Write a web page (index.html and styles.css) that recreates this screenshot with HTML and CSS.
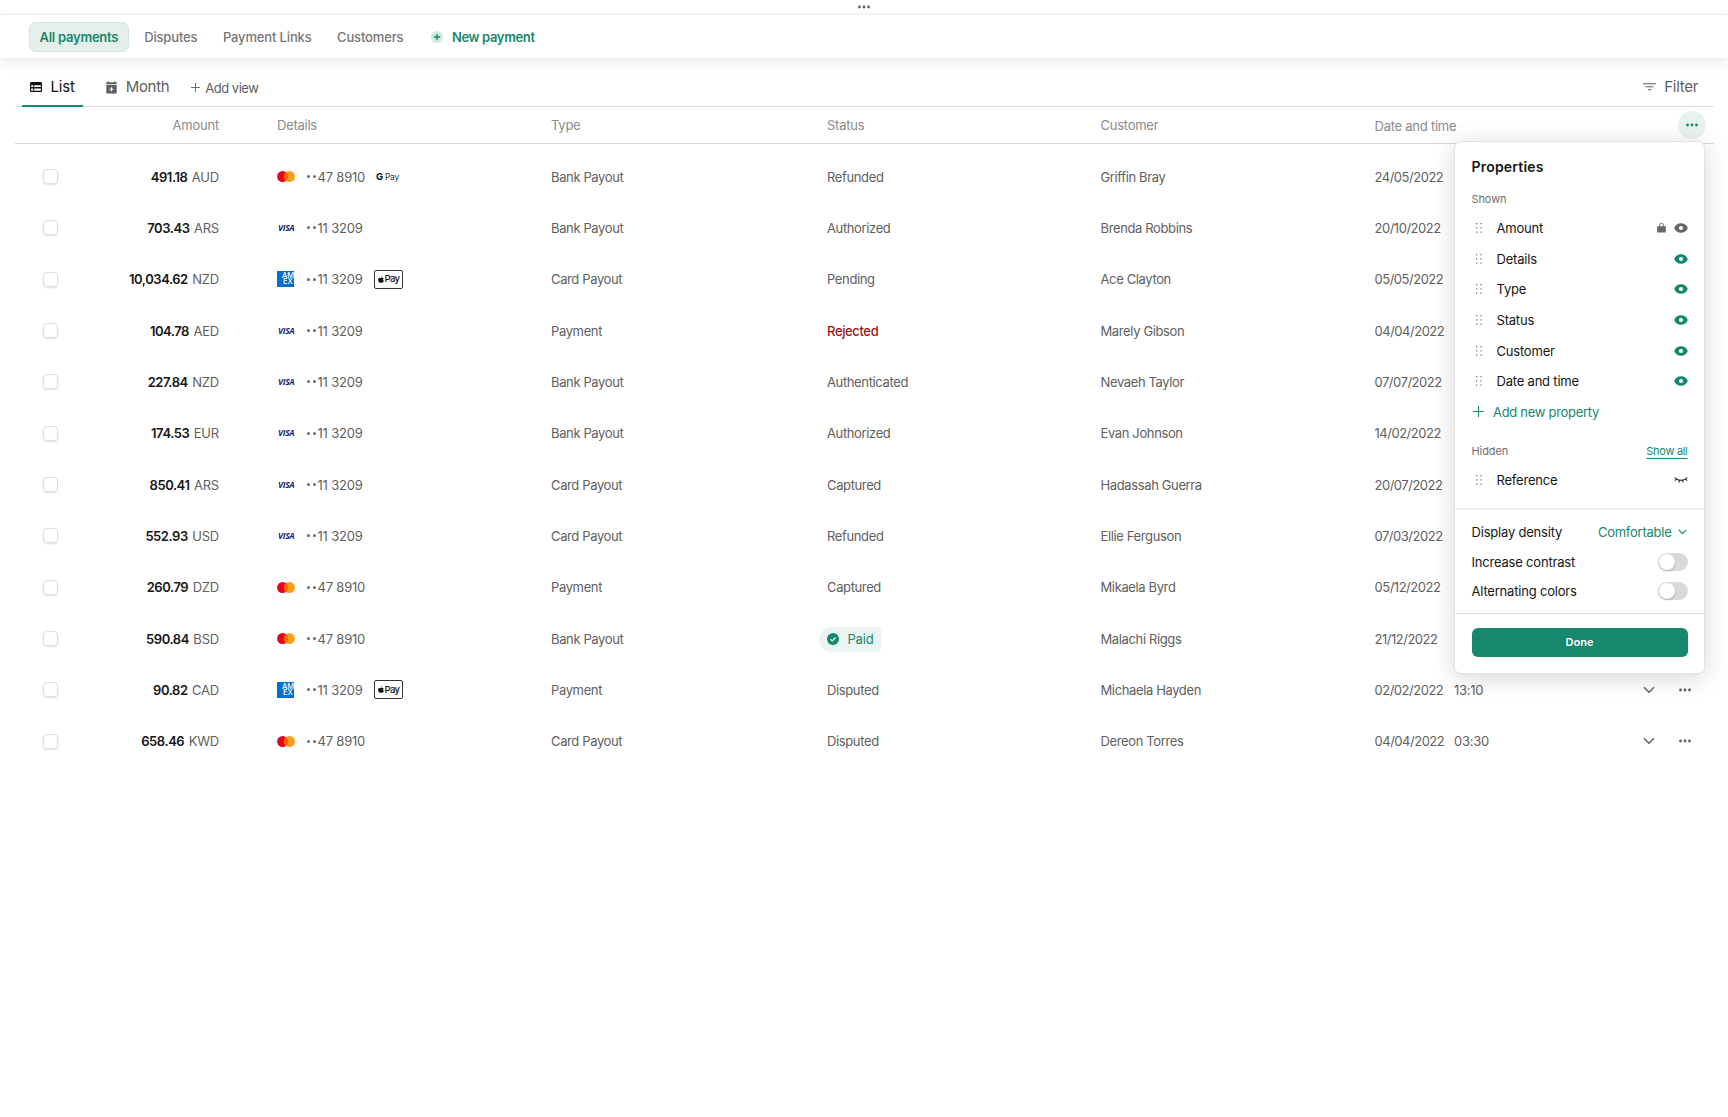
FILE: index.html
```html
<!DOCTYPE html>
<html lang="en">
<head>
  <title>All payments</title>
  <meta charset="UTF-8">
  <meta name="viewport" content="width=device-width, initial-scale=1.0">
  <link rel="stylesheet" href="styles.css">
</head>
<body>
<svg class="sprite" aria-hidden="true">
  <symbol id="dots" viewBox="0 0 12 4"><circle cx="1.5" cy="2" r="1.4"/><circle cx="6" cy="2" r="1.4"/><circle cx="10.5" cy="2" r="1.4"/></symbol>
  <symbol id="chevron" viewBox="0 0 12 8"><path d="M1 1.2l5 5 5-5" fill="none" stroke="currentColor" stroke-width="1.5"/></symbol>
  <symbol id="plus" viewBox="0 0 12 12"><path d="M6 .5v11M.5 6h11" fill="none" stroke="currentColor" stroke-width="1.2" stroke-linecap="round"/></symbol>
  <symbol id="plus-bold" viewBox="0 0 8 8"><path d="M4 1v6M1 4h6" fill="none" stroke="currentColor" stroke-width="1.3"/></symbol>
  <symbol id="eye" viewBox="0 0 14 10"><path fill-rule="evenodd" d="M7 .2C3.8.2 1.2 2.2.2 5 1.2 7.8 3.8 9.8 7 9.8s5.800-2 6.800-4.800C12.800 2.200 10.200.2 7 .2zM7 2.900a2.100 2.100 0 1 1 0 4.200 2.100 2.100 0 0 1 0-4.200z"/></symbol>
  <symbol id="eye-closed" viewBox="0 0 14 8"><path d="M.8 1.500c3 3.600 9.400 3.600 12.400 0M2.500 3.200L.8 4.600M5.300 4.300L5 6.500M8.700 4.300L9 6.500M11.500 3.200l1.700 1.400" fill="none" stroke="currentColor" stroke-width="1.1"/></symbol>
  <symbol id="bag" viewBox="0 0 9 10"><path d="M.2 3.200h8.600v6.300H.2z"/><path d="M2.600 3.500V2.200a1.900 1.900 0 0 1 3.800 0v1.300" fill="none" stroke="currentColor" stroke-width="1"/></symbol>
  <symbol id="grip" viewBox="0 0 6 10"><path d="M0 0h1.300v1.300H0zM4.400 0h1.300v1.300H4.400zM0 4.200h1.300v1.300H0zM4.400 4.200h1.300v1.300H4.400zM0 8.400h1.300v1.300H0zM4.400 8.400h1.300v1.300H4.400z"/></symbol>
  <symbol id="mastercard" viewBox="0 0 18 11"><circle cx="5.600" cy="5.500" r="5.500" fill="#eb001b"/><circle cx="12.400" cy="5.500" r="5.500" fill="#f79e1b"/><path d="M9 1.180a5.500 5.500 0 0 1 0 8.640 5.500 5.500 0 0 1 0-8.640z" fill="#ff5f00"/></symbol>
  <symbol id="apple" viewBox="0 0 12 14"><path d="M8.500.1c.1 1.500-1.200 2.900-2.600 2.800C5.800 1.500 7.100.2 8.500.1zM11.400 4.800c-1.900 1.200-1.600 3.900.4 4.700-.6 1.700-1.800 3.800-3.100 3.900-1 0-1.300-.6-2.400-.6s-1.500.6-2.400.6C2 13.400.2 10.200.2 7.600.2 5 1.900 3.600 3.500 3.600c1.100 0 2 .7 2.700.7.600 0 1.600-.8 3-.8.9 0 1.700.5 2.200 1.300z"/></symbol>
</svg>

<div class="topbar"><svg class="i-dots"><use href="#dots"/></svg></div>
<nav class="nav">
  <a class="nav-item active">All payments</a>
  <a class="nav-item">Disputes</a>
  <a class="nav-item">Payment Links</a>
  <a class="nav-item">Customers</a>
  <a class="nav-new"><span class="plus-badge"><svg><use href="#plus-bold"/></svg></span>New payment</a>
</nav>

<main class="content">
  <div class="views">
    <a class="view active">
      <svg class="i-list" viewBox="0 0 12 10"><rect width="12" height="10" rx="1.200"/><path d="M1.200 3.300h2v1.800h-2zM4.200 3.300h6.600v1.800H4.200zM1.200 6.500h2v2.200h-2zM4.200 6.500h6.600v2.200H4.200z" fill="#fff"/></svg>
      List
    </a>
    <a class="view month">
      <svg class="i-month" viewBox="0 0 11 13"><path d="M.3 1.300h10.400v1.900H.3zM.3 4h10.400v7.800a.8.800 0 0 1-.8.800H1.100a.8.800 0 0 1-.8-.8z"/><path d="M2.200.2v2.200M8.800.2v2.200" stroke="currentColor" stroke-width="1"/><path d="M5.500 6.200v4M3.500 8.200h4" stroke="#fff" stroke-width="1.100"/></svg>
      Month
    </a>
    <a class="add-view"><svg><use href="#plus"/></svg>Add view</a>
    <a class="filter"><svg viewBox="0 0 13 8"><path d="M0 .8h13M2.500 3.800h8M4.800 6.800h3.400" fill="none" stroke="currentColor" stroke-width="1.100"/></svg>Filter</a>
  </div>

  <div class="row head">
    <span></span>
    <span class="amount">Amount</span>
    <span>Details</span>
    <span>Type</span>
    <span>Status</span>
    <span>Customer</span>
    <span class="head-date">Date and time</span>
    <span class="more"><svg class="i-dots"><use href="#dots"/></svg></span>
  </div>
  <div id="rows" class="rows"></div>

  <aside class="panel">
    <section class="panel-props">
      <h2>Properties</h2>
      <div class="label">Shown</div>
      <ul id="props"></ul>
      <a class="add-prop"><svg><use href="#plus"/></svg>Add new property</a>
      <div class="label hidden-label">Hidden<a>Show all</a></div>
      <div class="prop"><svg class="i-grip"><use href="#grip"/></svg><span>Reference</span><svg class="i-closed"><use href="#eye-closed"/></svg></div>
    </section>
    <section class="panel-display">
      <div class="option density">Display density<span class="select">Comfortable<svg><use href="#chevron"/></svg></span></div>
      <div class="option">Increase contrast<span class="toggle"></span></div>
      <div class="option">Alternating colors<span class="toggle"></span></div>
    </section>
    <section class="panel-foot"><button>Done</button></section>
  </aside>
</main>

<script>
const payments = [
  ['491.18', 'AUD', 'mc', 'gpay', 'Bank Payout', 'Refunded', 'Griffin Bray', '24/05/2022'],
  ['703.43', 'ARS', 'visa', '', 'Bank Payout', 'Authorized', 'Brenda Robbins', '20/10/2022'],
  ['10,034.62', 'NZD', 'amex', 'apple', 'Card Payout', 'Pending', 'Ace Clayton', '05/05/2022'],
  ['104.78', 'AED', 'visa', '', 'Payment', 'Rejected', 'Marely Gibson', '04/04/2022'],
  ['227.84', 'NZD', 'visa', '', 'Bank Payout', 'Authenticated', 'Nevaeh Taylor', '07/07/2022'],
  ['174.53', 'EUR', 'visa', '', 'Bank Payout', 'Authorized', 'Evan Johnson', '14/02/2022'],
  ['850.41', 'ARS', 'visa', '', 'Card Payout', 'Captured', 'Hadassah Guerra', '20/07/2022'],
  ['552.93', 'USD', 'visa', '', 'Card Payout', 'Refunded', 'Ellie Ferguson', '07/03/2022'],
  ['260.79', 'DZD', 'mc', '', 'Payment', 'Captured', 'Mikaela Byrd', '05/12/2022'],
  ['590.84', 'BSD', 'mc', '', 'Bank Payout', 'Paid', 'Malachi Riggs', '21/12/2022'],
  ['90.82', 'CAD', 'amex', 'apple', 'Payment', 'Disputed', 'Michaela Hayden', '02/02/2022', '13:10'],
  ['658.46', 'KWD', 'mc', '', 'Card Payout', 'Disputed', 'Dereon Torres', '04/04/2022', '03:30']
];
const brands = {
  mc: '<svg class="i-mc"><use href="#mastercard"/></svg>',
  visa: '<b class="visa">VISA</b>',
  amex: '<b class="amex"><i>AM</i><i>EX</i></b>'
};
const wallets = {
  '': '',
  gpay: '<span class="gpay"><b>G</b>Pay</span>',
  apple: '<span class="applepay"><svg><use href="#apple"/></svg>Pay</span>'
};
function statusCell(status) {
  if (status === 'Paid') {
    return '<span class="paid"><svg viewBox="0 0 12 12"><circle cx="6" cy="6" r="6" fill="currentColor"/><path d="M3.400 6.200l1.800 1.700 3.400-3.400" fill="none" stroke="#fff" stroke-width="1.100"/></svg>Paid</span>';
  }
  return '<span class="' + status.toLowerCase() + '">' + status + '</span>';
}
document.getElementById('rows').innerHTML = payments.map(p => `
  <div class="row">
    <span class="check"></span>
    <span class="amount"><b>${p[0]}</b> ${p[1]}</span>
    <span class="details"><span class="brand">${brands[p[2]]}</span><span class="card"><i></i><i></i>${p[2] === 'mc' ? '47 8910' : '11 3209'}</span>${wallets[p[3]]}</span>
    <span>${p[4]}</span>
    <span>${statusCell(p[5])}</span>
    <span>${p[6]}</span>
    <span class="date"><span>${p[7]}</span><span>${p[8] || ''}</span></span>
    <span class="actions"><svg class="i-chevron"><use href="#chevron"/></svg><svg class="i-dots"><use href="#dots"/></svg></span>
  </div>`).join('');

document.getElementById('props').innerHTML = ['Amount', 'Details', 'Type', 'Status', 'Customer', 'Date and time'].map((name, i) => `
  <li class="prop${i === 0 ? ' locked' : ''}">
    <svg class="i-grip"><use href="#grip"/></svg><span>${name}</span>
    ${i === 0 ? '<svg class="i-bag"><use href="#bag"/></svg>' : ''}<svg class="i-eye"><use href="#eye"/></svg>
  </li>`).join('');
</script>
</body>
</html>
```
FILE: styles.css
```css
* {
  box-sizing: border-box;
}
body {
  margin: 0;
  height: 1117px;
  overflow: hidden;
  background: #fff;
  color: #5f6060;
  font-family: Inter, 'Liberation Sans', sans-serif;
  font-size: 13px;
  line-height: 18px;
  letter-spacing: -0.2px;
}
svg {
  display: block;
  flex: none;
  fill: currentColor;
}
.sprite {
  position: absolute;
  width: 0;
  height: 0;
}
.i-dots {
  width: 12px;
  height: 4px;
}
.topbar {
  display: flex;
  justify-content: center;
  height: 15px;
  padding-top: 5px;
  border-bottom: 1px solid #efefef;
}
.nav {
  display: flex;
  align-items: center;
  height: 44px;
  padding: 0 28.5px;
  border-bottom: 1px solid #ececec;
  box-shadow: 0 4px 14px rgba(0, 0, 0, 0.08);
  font-weight: 500;
  letter-spacing: -0.15px;
  color: #757676;
}
.nav-item {
  margin-right: 25.5px;
}
.nav-item.active {
  margin-right: 15px;
  padding: 5px 10px;
  border: 1px solid #cfe5dd;
  border-radius: 7px;
  background: #e5f0eb;
  color: #17876d;
  font-weight: 600;
  letter-spacing: -0.25px;
}
.nav-new {
  display: flex;
  align-items: center;
  gap: 9px;
  margin-left: 2px;
  color: #17876d;
  font-weight: 600;
  letter-spacing: -0.35px;
}
.plus-badge {
  display: flex;
  align-items: center;
  justify-content: center;
  width: 12px;
  height: 12px;
  border-radius: 50%;
  background: #cfe6df;
}
.plus-badge svg {
  width: 8px;
  height: 8px;
}
.content {
  position: relative;
  padding: 0 14px 0 15px;
}
.views {
  display: flex;
  align-items: center;
  height: 48px;
  padding-top: 9px;
  border-bottom: 1px solid #dcdcdc;
  font-size: 15px;
}
.view {
  display: flex;
  align-items: center;
  gap: 9px;
}
.view.active {
  height: 39px;
  margin: 1px 0 0 6.5px;
  padding: 1px 8px 0;
  border-bottom: 2px solid #17876d;
  color: #111;
}
.i-list {
  width: 12px;
  height: 10px;
}
.i-month {
  width: 11px;
  height: 13px;
}
.month {
  margin-left: 23px;
  letter-spacing: -0.3px;
}
.add-view {
  display: flex;
  align-items: center;
  gap: 5px;
  margin-left: 22px;
  padding-top: 1px;
  font-size: 13px;
  letter-spacing: -0.5px;
}
.add-view svg {
  width: 9px;
  height: 9px;
}
.filter {
  display: flex;
  align-items: center;
  gap: 8px;
  margin-left: auto;
  margin-right: 16px;
  letter-spacing: -0.3px;
}
.filter svg {
  width: 13px;
  height: 8px;
}
.row {
  display: grid;
  grid-template-columns: 49px 155px 274px 276px 273.5px 274px 1fr 71px;
  align-items: center;
  height: 51.33px;
  letter-spacing: -0.37px;
}
.row > :nth-child(n + 3):nth-child(-n + 7) {
  margin-left: 58px;
}
.head {
  height: 37px;
  border-bottom: 1px solid #d9d9d9;
  color: #8a8b8b;
  letter-spacing: -0.25px;
}
.head-date {
  padding-top: 1px;
}
.more {
  display: flex;
  align-items: center;
  justify-content: center;
  justify-self: end;
  width: 28px;
  height: 28px;
  margin-right: 8px;
  border-radius: 50%;
  background: #e8f3f0;
  color: #17876d;
}
.rows {
  padding-top: 7px;
}
.amount {
  text-align: right;
  letter-spacing: -0.2px;
}
.amount b {
  margin-right: 1px;
  color: #161616;
  font-weight: 600;
  letter-spacing: -0.45px;
}
.check {
  width: 15px;
  height: 15px;
  margin-left: 28px;
  border: 1px solid #dedede;
  border-radius: 4px;
  box-shadow: 0 1px 2px rgba(0, 0, 0, 0.12);
}
.details {
  display: flex;
  align-items: center;
}
.brand {
  width: 30px;
}
.i-mc {
  width: 18px;
  height: 11px;
}
.visa {
  display: block;
  padding-left: 1px;
  color: #1a1f71;
  font: italic 700 8.5px/10px 'Open Sans', sans-serif;
  letter-spacing: -0.3px;
}
.amex {
  display: block;
  width: 17px;
  height: 16px;
  padding: 2px 0 0 5px;
  overflow: hidden;
  background: #016fd0;
  color: #fff;
  font: 500 7.5px/6px Inter, sans-serif;
  letter-spacing: 0;
}
.amex i {
  display: block;
  font-style: normal;
}
.amex i + i {
  padding-left: 1px;
}
.card {
  display: flex;
  align-items: center;
  letter-spacing: -0.2px;
}
.card i {
  width: 3px;
  height: 3px;
  margin-right: 3px;
  border-radius: 50%;
  background: #6a6b6b;
}
.card i + i {
  margin-right: 1.5px;
}
.gpay {
  margin-left: 11px;
  color: #2c2e30;
  font-size: 8.5px;
  letter-spacing: -0.3px;
}
.gpay b {
  margin-right: 2px;
  color: #111;
  font-size: 9.5px;
}
.applepay {
  display: flex;
  align-items: center;
  gap: 1px;
  height: 19px;
  margin-left: 11px;
  padding: 0 3px;
  border: 1px solid #333;
  border-radius: 2px;
  color: #111;
  font-size: 9.5px;
  font-weight: 500;
  letter-spacing: -0.7px;
}
.applepay svg {
  width: 6px;
  height: 7px;
}
.rejected {
  color: #a01414;
  font-weight: 500;
}
.paid {
  display: inline-flex;
  align-items: center;
  gap: 8.5px;
  height: 25px;
  margin: 1px 0 0 -8px;
  padding: 0 8px;
  border-radius: 13px 4px 4px 13px;
  background: #eaf4f2;
  color: #17876d;
  letter-spacing: -0.2px;
}
.paid svg {
  width: 12px;
  height: 12px;
}
.date {
  display: flex;
  letter-spacing: -0.48px;
}
.date span:first-child {
  width: 79.5px;
}
.date span + span {
  letter-spacing: -0.25px;
}
.actions {
  display: flex;
  align-items: center;
  gap: 24px;
}
.i-chevron {
  width: 12px;
  height: 8px;
}
.panel {
  position: absolute;
  top: 82px;
  left: 1454px;
  width: 251px;
  height: 533px;
  border: 1px solid #e2e2e2;
  border-radius: 7px;
  background: #fff;
  box-shadow: 0 4px 24px rgba(0, 0, 0, 0.16);
  color: #161616;
}
.panel-props {
  height: 366px;
  padding: 16px 16.5px 0;
}
.panel h2 {
  margin: 0;
  font-size: 14px;
  font-weight: 600;
  line-height: 18px;
  letter-spacing: 0.2px;
}
.label {
  display: flex;
  justify-content: space-between;
  margin-top: 14px;
  color: #6d6e6e;
  font-size: 11px;
  line-height: 18px;
  letter-spacing: -0.1px;
}
.panel ul {
  margin: 5px 0 0;
  padding: 0;
  list-style: none;
}
.prop {
  display: flex;
  align-items: center;
  height: 30.6px;
  padding-left: 4px;
}
.prop > span {
  margin: 0 auto 0 15px;
}
.i-grip {
  width: 6px;
  height: 10px;
  color: #777;
}
.i-eye {
  width: 14px;
  height: 10px;
  color: #17876d;
}
.locked .i-eye,
.i-bag {
  color: #666;
}
.i-bag {
  width: 9px;
  height: 10px;
  margin-right: 8px;
}
.i-closed {
  width: 14px;
  height: 8px;
}
.add-prop {
  display: flex;
  align-items: center;
  gap: 9.5px;
  height: 30.6px;
  padding-left: 1px;
  color: #17876d;
  letter-spacing: -0.3px;
}
.add-prop svg {
  width: 11px;
  height: 11px;
}
.hidden-label {
  margin: 15px 0 5px;
}
.hidden-label a {
  color: #17876d;
  text-decoration: underline;
  text-underline-offset: 3px;
  letter-spacing: -0.3px;
}
.panel-display {
  height: 106px;
  padding: 6px 16.5px 0;
  border-top: 2px solid #ececec;
  border-bottom: 1px solid #dadada;
}
.option {
  display: flex;
  align-items: center;
  justify-content: space-between;
  height: 29px;
}
.density {
  height: 31px;
}
.select {
  display: flex;
  align-items: center;
  gap: 6px;
  padding-right: 1px;
  color: #17876d;
  letter-spacing: -0.25px;
}
.select svg {
  width: 9px;
  height: 6px;
}
.toggle {
  width: 30px;
  height: 18px;
  padding: 1px;
  border-radius: 9px;
  background: #d9d9d9;
}
.toggle::before {
  content: '';
  display: block;
  width: 16px;
  height: 16px;
  border-radius: 50%;
  background: #fff;
  box-shadow: 0 1px 2px rgba(0, 0, 0, 0.25);
}
.panel-foot {
  padding: 14px 16.5px;
}
.panel-foot button {
  display: block;
  width: 100%;
  height: 29px;
  padding: 0 0 1px;
  border: none;
  border-radius: 6px;
  background: #17876d;
  color: #fff;
  font: 600 11px Inter, sans-serif;
  letter-spacing: 0;
}
```
